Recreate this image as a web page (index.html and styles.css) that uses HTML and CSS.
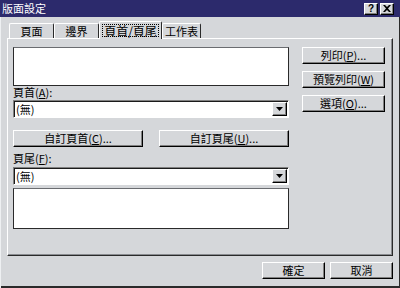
FILE: index.html
```html
<!DOCTYPE html>
<html lang="zh-Hant">
<head>
  <meta charset="UTF-8">
  <title>版面設定</title>
  <link rel="stylesheet" href="styles.css">
</head>
<body>
  <div class="dialog">
    <div class="titlebar">
      <span class="title">版面設定</span>
      <div class="caption-btns">
        <span class="cbtn">?</span>
        <span class="cbtn">
          <svg width="8" height="7" viewBox="0 0 8 7"><path d="M0 0h2l2 2 2-2h2L5 3.5 8 7H6L4 5 2 7H0l3-3.5z" fill="#000"/></svg>
        </span>
      </div>
    </div>
    <div class="content">
      <div class="tabs">
        <div class="tab w1">頁面</div>
        <div class="tab w2">邊界</div>
        <div class="tab active"><span class="focus">頁首/頁尾</span></div>
        <div class="tab w4">工作表</div>
      </div>
      <div class="panel">
        <div class="main">
          <div class="preview"></div>
          <div class="label">頁首(<u>A</u>):</div>
          <div class="combo">
            <span class="value">(無)</span>
            <span class="arrow"><svg width="7" height="4" viewBox="0 0 7 4"><path d="M0 0h7L3.5 4z" fill="#000"/></svg></span>
          </div>
          <div class="custom-row">
            <button class="btn wide">自訂頁首(<u>C</u>)...</button>
            <button class="btn wide">自訂頁尾(<u>U</u>)...</button>
          </div>
          <div class="label second">頁尾(<u>F</u>):</div>
          <div class="combo">
            <span class="value">(無)</span>
            <span class="arrow"><svg width="7" height="4" viewBox="0 0 7 4"><path d="M0 0h7L3.5 4z" fill="#000"/></svg></span>
          </div>
          <div class="preview tall"></div>
        </div>
        <div class="side">
          <button class="btn">列印(<u>P</u>)...</button>
          <button class="btn">預覽列印(<u>W</u>)</button>
          <button class="btn">選項(<u>O</u>)...</button>
        </div>
      </div>
      <div class="actions">
        <button class="btn action">確定</button>
        <button class="btn action">取消</button>
      </div>
    </div>
  </div>
</body>
</html>
```

FILE: styles.css
```css
* {
  box-sizing: border-box;
}

body {
  margin: 0;
  font-family: "Noto Sans CJK TC", "Liberation Sans", sans-serif;
  font-size: 11px;
  color: #000;
}

.dialog {
  width: 400px;
  height: 288px;
  background: #d5d7da;
  box-shadow: inset 1px 0 #eef0f2, inset -1px -2px #2a2a2a;
}

.titlebar {
  height: 17px;
  background: #2c2a6c;
  color: #fff;
  display: flex;
  align-items: center;
  justify-content: space-between;
  padding: 0 6px 0 2px;
}

.title {
  font-size: 11px;
  line-height: 17px;
}

.caption-btns {
  display: flex;
  gap: 2px;
}

.cbtn {
  width: 14px;
  height: 12px;
  background: #d5d7da;
  border: 1px solid;
  border-color: #fff #000 #000 #fff;
  box-shadow: inset -1px -1px #808080;
  display: flex;
  align-items: center;
  justify-content: center;
  font-family: "Liberation Sans", sans-serif;
  font-weight: bold;
  font-size: 10px;
  line-height: 1;
  color: #000;
}

.content {
  padding: 3px 7px 0 7px;
}

.tabs {
  display: flex;
  align-items: flex-end;
  height: 18px;
  padding-left: 2px;
}

.tab {
  height: 15px;
  border-top: 1px solid #fff;
  border-left: 1px solid #fff;
  border-right: 1px solid #2a2a2a;
  border-radius: 2px 2px 0 0;
  display: flex;
  align-items: center;
  justify-content: center;
  line-height: 12px;
}

.w1, .w2 {
  width: 45px;
}

.w4 {
  width: 39px;
}

.tab.active {
  width: 63px;
  height: 18px;
  margin-bottom: -1px;
  background: #d5d7da;
  position: relative;
  z-index: 1;
  font-size: 12px;
}

.focus {
  border: 1px dotted #000;
  padding: 0 1px;
  line-height: 11px;
}

.panel {
  height: 218px;
  border: 1px solid;
  border-color: #fff #2a2a2a #2a2a2a #fff;
  box-shadow: inset -1px -1px #8a8c90;
  display: flex;
  gap: 13px;
  padding: 8px 6px 0 5px;
}

.main {
  width: 276px;
  display: flex;
  flex-direction: column;
}

.preview {
  height: 39px;
  background: #fff;
  border: 1px solid #2a2a2a;
  border-color: #6a6c70 #2a2a2a #2a2a2a #2a2a2a;
}

.preview.tall {
  height: 41px;
  margin-top: 3px;
}

.label {
  height: 13px;
  line-height: 13px;
  margin-bottom: 1px;
}

.label.second {
  margin-top: 5px;
  margin-bottom: 2px;
}

.combo {
  height: 18px;
  background: #fff;
  border: 1px solid;
  border-color: #808080 #fff #fff #808080;
  box-shadow: inset 1px 1px #1a1a1a;
  display: flex;
  align-items: center;
  justify-content: space-between;
  padding: 1px 1px 1px 2px;
}

.value {
  line-height: 14px;
}

.arrow {
  width: 15px;
  height: 14px;
  background: #d5d7da;
  border: 1px solid;
  border-color: #fff #000 #000 #fff;
  box-shadow: inset -1px -1px #808080;
  display: flex;
  align-items: center;
  justify-content: center;
}

.custom-row {
  display: flex;
  justify-content: space-between;
  margin-top: 12px;
}

.btn {
  height: 17px;
  padding: 0;
  background: #d5d7da;
  border: 1px solid;
  border-color: #fff #000 #000 #fff;
  box-shadow: inset -1px -1px #808080;
  font-family: inherit;
  font-size: 11px;
  line-height: 13px;
  color: #000;
}

.btn.wide {
  width: 130px;
}

.side {
  width: 83px;
  display: flex;
  flex-direction: column;
  gap: 7px;
}

.actions {
  display: flex;
  justify-content: flex-end;
  gap: 5px;
  margin-top: 6px;
}

.btn.action {
  width: 63px;
}
```
